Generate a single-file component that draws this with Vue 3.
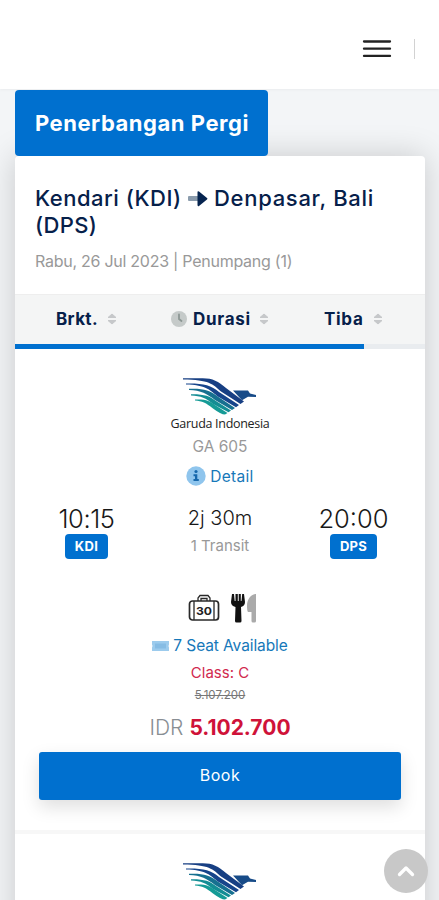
<script setup>
const flights = [
  { id: 1, code: 'GA 605', depart: '10:15', from: 'KDI', duration: '2j 30m', stops: '1 Transit', arrive: '20:00', to: 'DPS', seats: '7 Seat Available', cabin: 'Class: C', oldPrice: '5.107.200', price: '5.102.700' },
  { id: 2 }
]
const feathers = [
  { d: 'M0 1.200H18C29 .8 35 4 43 11L61 24.500L57.500 27L38 14.500C30 7 26 2.600 0 2.400Z', fill: '#173f83' },
  { d: 'M3 6.500C20 6.200 28 8 36 15L56 28L53 30.300L34 19C26 12 21 8 3 7.600Z', fill: '#17458b' },
  { d: 'M6 11.800C20 11.300 27 13 34 19L52 31L49 33L32 23C24 17 18 13.200 6 13Z', fill: '#167090' },
  { d: 'M8 17.200C21 17 27 19 33 24L48 33.500L45.500 35.300L30 27C23 21 18 18.700 8 18.400Z', fill: '#138d94' },
  { d: 'M12 22.500C23 22 27 24 32 28L44.500 36L42 37.600Q38 37.500 30 31.500C23 26 19 24 12 23.600Z', fill: '#159b96' },
  { d: 'M50 13.500H65L67 16.500L73 18V20L65 19.700L59 23.200Z', fill: '#174b88' }
]
const progress = 85
</script>

<template>
  <div class="page">
    <header class="topbar">
      <svg class="menu" width="30" height="20" viewBox="0 0 30 20"><path d="M2 2.500H28M2 9.700H28M2 16.900H28" stroke="#222" stroke-width="2.300" stroke-linecap="round" /></svg>
      <i class="rule"></i>
    </header>
    <main>
      <div class="tab">Penerbangan Pergi</div>
      <section class="card">
        <div class="head">
          <h1>
            <span class="kendari">Kendari (KDI)</span>
            <svg class="arrow" width="20" height="18" viewBox="0 0 20 18"><path d="M1 6H10V11H1Q0 11 0 10V7Q0 6 1 6Z" fill="#8b9cad" /><path d="M9.500 2.200Q9.500 .6 11 1.500L19 8Q20 8.700 19 9.400L11 15.900Q9.500 16.700 9.500 15Z" fill="#06244f" /></svg>
            <span class="denpasar">Denpasar, Bali</span>
            <span class="dps-title">(DPS)</span>
          </h1>
          <p class="date">Rabu, 26 Jul 2023 | Penumpang (1)</p>
        </div>
        <div class="sorts">
          <div class="sort s1"><span>Brkt.</span><svg width="10" height="14" viewBox="0 0 10 14"><path d="M1 5.500L5 2L9 5.500ZM1 8.500L5 12L9 8.500Z" fill="#c6c8ca" stroke="#c6c8ca" stroke-linejoin="round" /></svg></div>
          <div class="sort s2"><svg class="clock" width="16" height="16" viewBox="0 0 16 16"><circle cx="8" cy="8" r="8" fill="#c5cac9" /><path d="M8 3.500V8L10.500 10" fill="none" stroke="#8c9794" stroke-width="1.800" stroke-linecap="round" /></svg><span>Durasi</span><svg width="10" height="14" viewBox="0 0 10 14"><path d="M1 5.500L5 2L9 5.500ZM1 8.500L5 12L9 8.500Z" fill="#c6c8ca" stroke="#c6c8ca" stroke-linejoin="round" /></svg></div>
          <div class="sort s3"><span>Tiba</span><svg width="10" height="14" viewBox="0 0 10 14"><path d="M1 5.500L5 2L9 5.500ZM1 8.500L5 12L9 8.500Z" fill="#c6c8ca" stroke="#c6c8ca" stroke-linejoin="round" /></svg></div>
        </div>
        <div class="progress"><div class="bar" :style="{ width: progress + '%' }"></div></div>
        <article v-for="flight in flights" :key="flight.id" class="flight">
          <svg class="bird" width="75" height="38" viewBox="0 0 75 38"><path v-for="f in feathers" :key="f.d" :d="f.d" :fill="f.fill" /></svg>
          <template v-if="flight.code">
            <div class="airline">Garuda Indonesia</div>
            <div class="code">{{ flight.code }}</div>
            <div class="detail"><svg width="20" height="20" viewBox="0 0 20 20"><circle cx="10" cy="10" r="9.700" fill="#8fc5ed" /><circle cx="10" cy="5.500" r="1.600" fill="#1768ac" /><path d="M7.500 8.300H11.300V13H12.800V15H7.500V13H9V10.200H7.500Z" fill="#1768ac" /></svg><span>Detail</span></div>
            <div class="times">
              <div class="place"><span class="time t1">{{ flight.depart }}</span><span class="badge b1">{{ flight.from }}</span></div>
              <div class="middle"><span class="dur">{{ flight.duration }}</span><span class="stop">{{ flight.stops }}</span></div>
              <div class="place"><span class="time t2">{{ flight.arrive }}</span><span class="badge b2">{{ flight.to }}</span></div>
            </div>
            <div class="services">
              <svg width="32" height="28" viewBox="0 0 32 28"><path d="M10 7V4L12 1.500H20L22 4V7M13 7V4.500H19V7" fill="none" stroke="#292929" stroke-width="1.300" /><rect x="1.500" y="7" width="29" height="19" rx="3" fill="#fff" stroke="#292929" stroke-width="1.700" /><path d="M6 7V26M26 7V26" stroke="#292929" stroke-width="1.300" /><text x="16" y="20.500" text-anchor="middle" class="bag" textLength="16" lengthAdjust="spacingAndGlyphs">30</text></svg>
              <svg width="26" height="30" viewBox="0 0 26 30"><path d="M1 1H3L3.700 8H4.500V1H6.800V8H7.700V1H9.800V8H10.500L11.200 1H13L14 9Q14 13 10 14L10.500 28Q10.500 29.500 9 29.500H5.500Q4 29.500 4 28L4.500 14Q0 13 0 9Z" fill="#111" /><path d="M25 1V28Q25 29.500 23.500 29.500H22Q20.500 29.500 20.500 28V19H17Q16 18 16 13C16 6 20 1 25 1Z" fill="#aaa" /></svg>
            </div>
            <div class="seat"><svg width="17" height="12" viewBox="0 0 17 12"><path d="M0 1H17V4.500Q16 6 17 7.500V11H0V7.500Q1 6 0 4.500Z" fill="#9ccbed" /><path d="M3 3.500H14V8.500H3Z" fill="#86bce4" /></svg><span>{{ flight.seats }}</span></div>
            <div class="cabin">{{ flight.cabin }}</div>
            <div class="old">{{ flight.oldPrice }}</div>
            <div class="price"><span class="cur">IDR</span><strong>{{ flight.price }}</strong></div>
            <button class="book">Book</button>
          </template>
        </article>
      </section>
    </main>
    <button class="totop" aria-label="Top"><svg width="18" height="12" viewBox="0 0 18 12"><path d="M2.500 9.500L9 3L15.500 9.500" fill="none" stroke="#fff" stroke-width="3.300" stroke-linecap="round" stroke-linejoin="round" /></svg></button>
  </div>
</template>

<style>
body { overflow: hidden; }
</style>

<style scoped>
* { box-sizing: border-box; }
.page { height: 100vh; overflow: hidden; background: #f3f5f7; font-family: Inter, "Open Sans", sans-serif; position: relative; white-space: nowrap; }
.topbar { height: 89px; background: #fff; display: flex; justify-content: flex-end; align-items: center; gap: 22px; padding: 8px 24px 0 0; box-shadow: 0 1px 3px rgba(0,0,0,.04); }
.rule { width: 1.500px; height: 20px; background: #d2d2d2; }
main { padding: 1px 14px 0 15px; }
.tab { position: relative; width: 253px; height: 66px; border-radius: 4px; background: #0070cf; color: #fff; font-size: 22px; font-weight: 700; line-height: 66px; padding-left: 20px; letter-spacing: .53px; }
.card { background: #fff; height: 900px; box-shadow: 0 0 32px rgba(0,0,0,.18); border-radius: 4px; }
.head { height: 138px; padding: 29px 20px 0; }
h1 { margin: 0; color: #06204a; font-size: 22px; font-weight: 450; line-height: 27px; display: flex; flex-wrap: wrap; align-items: center; }
.kendari { width: 153px; letter-spacing: .5px; }
.arrow { margin-right: 6px; }
.denpasar { letter-spacing: .7px; width: 180px; }
.dps-title { letter-spacing: .3px; }
.date { margin: 12px 0 0; color: #999; font-size: 16px; line-height: 21px; letter-spacing: -.26px; }
.sorts { height: 50px; background: #f4f5f5; border-top: 1px solid #eee; display: flex; align-items: center; color: #06204a; font-size: 17px; font-weight: 700; padding-bottom: 2px; }
.sort { display: flex; align-items: center; gap: 9px; }
.s1 { margin-left: 41px; width: 115px; letter-spacing: .35px; }
.s2 { width: 153px; letter-spacing: .7px; gap: 8px; }
.s2 .clock { margin-right: -2px; }
.s3 { letter-spacing: .7px; }
.progress { height: 5px; background: #e9ecef; }
.bar { height: 5px; background: #0070cf; }
.flight { height: 485px; border-bottom: 4px solid #f7f7f7; padding-top: 28px; display: flex; flex-direction: column; align-items: center; }
.bird { flex: none; }
.airline { font-family: "Open Sans", sans-serif; color: #222; font-size: 12.500px; font-weight: 500; line-height: 18px; letter-spacing: -.3px; }
.code { color: #999; font-size: 15.500px; line-height: 28px; }
.detail { display: flex; align-items: center; gap: 4px; color: #1678b9; font-size: 15.500px; letter-spacing: .3px; height: 30px; }
.times { display: flex; width: 100%; height: 70px; padding: 12px 20px 0; color: #181818; }
.place { width: 103px; display: flex; flex-direction: column; align-items: center; }
.middle { flex: 1; display: flex; flex-direction: column; align-items: center; }
.time { font-size: 25.500px; font-weight: 300; line-height: 31px; }
.t1 { letter-spacing: -.4px; }
.badge { height: 25px; border-radius: 4px; background: #0070cf; color: #fff; font-size: 13px; font-weight: 700; line-height: 25px; width: 43px; text-align: center; letter-spacing: .3px; }
.b2 { width: 47px; }
.dur { font-size: 20px; font-weight: 300; line-height: 31px; }
.stop { color: #999; font-size: 15px; line-height: 24px; }
.services { height: 30px; margin-top: 32px; display: flex; align-items: center; gap: 11px; padding-left: 4px; }
.bag { font: 700 11px Inter, sans-serif; fill: #222; }
.seat { height: 27px; margin-top: 9px; display: flex; align-items: center; gap: 4px; color: #1678b9; font-size: 15.500px; letter-spacing: -.1px; }
.cabin { color: #d1294e; font-size: 15px; line-height: 27px; }
.old { color: #777; font-size: 11.500px; line-height: 19px; text-decoration: line-through; }
.price { height: 45px; display: flex; align-items: center; gap: 6px; color: #888e93; font-size: 21px; font-weight: 300; padding-bottom: 1px; }
.price strong { color: #cf1239; font-weight: 700; }
.book { width: 362px; height: 48px; margin-top: 2px; border: 0; border-radius: 3px; background: #0070cf; color: #fff; font: 400 16px/46px Inter, sans-serif; letter-spacing: .5px; box-shadow: 0 7px 18px rgba(0,0,0,.13); flex: none; padding: 0 0 2px; }
.totop { position: absolute; left: 384px; top: 849px; width: 44px; height: 44px; border: 0; border-radius: 50%; background: #c8c8c8; display: flex; align-items: center; justify-content: center; padding: 0; }
</style>
